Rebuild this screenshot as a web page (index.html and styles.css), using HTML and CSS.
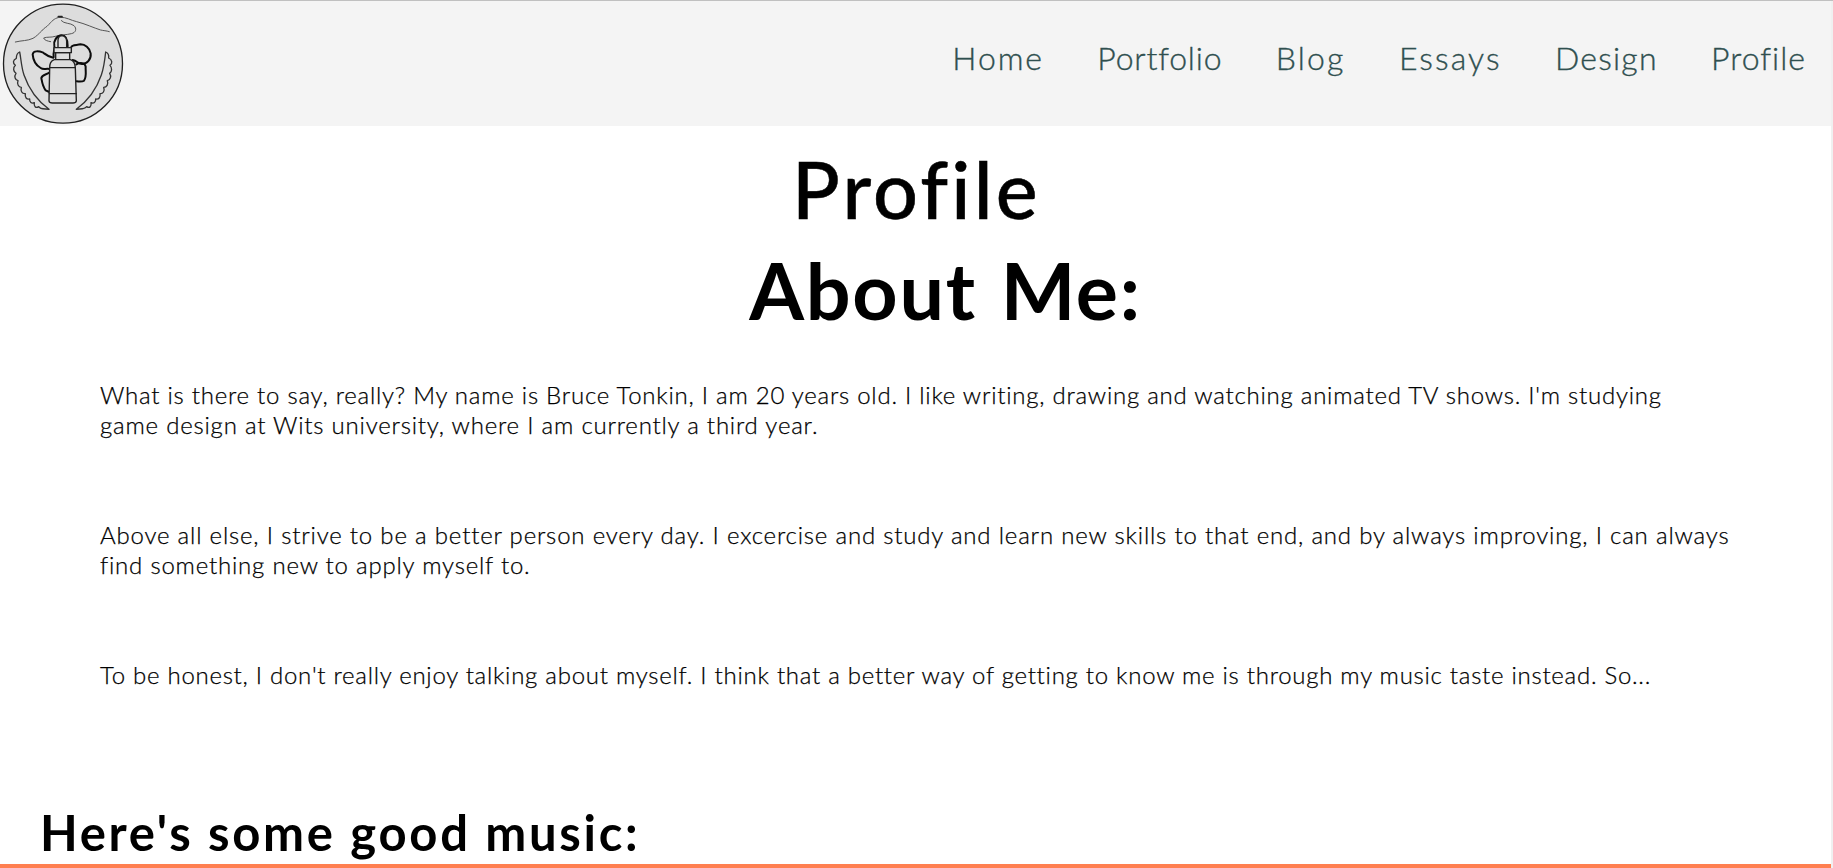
FILE: index.html
```
<!DOCTYPE html>
<html lang="en">
<head>
  <meta charset="utf-8">
  <title>Profile</title>
  <link rel="stylesheet" href="styles.css">
</head>
<body>
  <div class="page">
    <header class="header">
      <svg class="logo" viewBox="0 3 378 375" fill="none" stroke-linecap="round" stroke-linejoin="round">
        <circle cx="189" cy="191" r="178.500" fill="#dddddd" stroke="#202020" stroke-width="4"/>
        <g stroke="#555555" stroke-width="3">
          <path d="M46 126C66 121 82 123 99 115C111 108 116 101 125 93C133 82 139 83 147 73C158 60 167 53 180 52C199 51 212 61 230 65C255 71 282 84 302 90C310 92 319 92 328 95"/>
          <path d="M184 62C192 72 211 68 222 77C231 86 228 98 214 101C198 105 182 104 166 109C153 113 141 110 131 114C133 121 142 123 152 125"/>
          <path d="M175 50H186" stroke="#222222" stroke-width="5"/>
        </g>
        <g stroke="#333333" stroke-width="4">
          <path d="M59 156C51 159 49 168 49 175C38 180 38 190 46 196C38 204 40 214 48 220C41 230 46 240 54 242C50 252 56 262 64 262C61 273 66 282 76 281C74 292 80 299 89 297C88 307 95 312 103 308C101 319 107 326 116 320C121 329 136 326 147 328C108 299 85 263 72 225C64 202 63 175 59 156Z"/>
          <path d="M317 156C325 159 327 166 326 174C337 179 338 190 330 196C337 204 336 215 329 220C335 229 331 240 322 242C326 253 320 262 311 262C315 273 309 282 300 281C302 292 296 299 287 297C288 307 281 312 273 308C275 319 269 326 260 320C254 329 240 326 229 328C268 299 291 263 304 225C312 202 315 175 317 156Z"/>
        </g>
        <g stroke="#0c0c0c" stroke-width="6">
          <path d="M161 171C158 158 166 147 163 137C160 124 169 108 184 106C198 106 203 120 203 139"/>
          <path d="M214 141C216 133 229 136 242 133C255 133 269 143 272 160C274 178 261 192 247 192C235 193 232 183 218 180"/>
          <path d="M160 173C143 170 139 165 130 158C116 153 100 151 98 163C99 177 107 195 122 204C130 210 137 205 149 207"/>
          <path d="M229 193C241 187 255 188 257 200C256 215 261 229 252 242C247 246 238 245 230 244"/>
          <path d="M148 218C139 224 126 224 124 234C126 244 127 258 137 271L148 276"/>
        </g>
        <g stroke="#222222" stroke-width="4.200" fill="#dddddd">
          <path d="M174 143V120Q175 108 186 107Q199 109 200 123V143"/>
          <path d="M167 158H209V181H167Z"/>
          <path d="M162 143H214V158H162Z"/>
          <path d="M163 179Q148 184 149 205L147 303Q148 309 157 309H219Q228 309 229 303L226 205Q226 184 211 179Z"/>
          <path d="M149 203H226M148 281H229"/>
        </g>
      </svg>
      <nav class="nav">
        <a class="link home">Home</a>
        <a class="link portfolio">Portfolio</a>
        <a class="link blog">Blog</a>
        <a class="link essays">Essays</a>
        <a class="link design">Design</a>
        <a class="link profile">Profile</a>
      </nav>
    </header>
    <main>
      <h1 class="title">Profile</h1>
      <h2 class="about">About Me:</h2>
      <div class="bio">
        <p><span class="line snug">What is there to say, really? My name is Bruce Tonkin, I am 20 years old. I like writing, drawing and watching animated TV shows. I'm studying</span> <span class="line">game design at Wits university, where I am currently a third year.</span></p>
        <p><span class="line wide">Above all else, I strive to be a better person every day. I excercise and study and learn new skills to that end, and by always improving, I can always</span> <span class="line">find something new to apply myself to.</span></p>
        <p><span class="line tight">To be honest, I don't really enjoy talking about myself. I think that a better way of getting to know me is through my music taste instead. So...</span></p>
      </div>
      <h2 class="music">Here's some good music:</h2>
      <div class="player"></div>
    </main>
  </div>
</body>
</html>
```
FILE: styles.css
```
* { box-sizing: border-box; }

body {
  margin: 0;
  height: 868px;
  overflow: hidden;
  background: #fff;
  color: #000;
  font-family: Lato, "Liberation Sans", sans-serif;
  border-top: 1px solid #c0c0c0;
}

.page {
  height: 867px;
  border-right: 2px solid #f0f0f0;
  overflow: hidden;
}

.header {
  display: flex;
  justify-content: space-between;
  height: 125px;
  padding-right: 25px;
  background: #f4f4f4;
}

.logo { width: 126px; height: 125px; }

.nav {
  display: flex;
  gap: 53.4px;
  padding-top: 37px;
}

.link {
  color: darkslategray;
  font-size: 32px;
  font-weight: 300;
  line-height: 40px;
  white-space: nowrap;
  -webkit-text-stroke: 0.35px darkslategray;
}

.home { letter-spacing: 1.9px; }
.portfolio { letter-spacing: 0.8px; }
.blog { letter-spacing: 2.2px; }
.essays { letter-spacing: 2.1px; }
.design { letter-spacing: 1.2px; }
.profile { letter-spacing: 1px; }

.title,
.about {
  margin: 0;
  font-size: 79px;
  line-height: 101px;
  text-align: center;
}

.title {
  margin-top: 12px;
  padding-left: 2px;
  font-weight: 500;
  letter-spacing: 3.2px;
  -webkit-text-stroke: 0.5px #000;
}

.about {
  padding-left: 60px;
  font-weight: 700;
  letter-spacing: 1.7px;
  word-spacing: 3px;
}

.bio {
  display: flex;
  flex-direction: column;
  gap: 80px;
  margin: 40px 80px 0 100px;
  font-size: 24px;
  font-weight: 300;
  line-height: 30px;
  -webkit-text-stroke: 0.25px #000;
}

.bio p { margin: 0; }

.line {
  display: block;
  white-space: nowrap;
  letter-spacing: 0.79px;
}

.line.snug { letter-spacing: 0.75px; }
.line.tight { letter-spacing: 0.73px; }
.line.wide { letter-spacing: 0.81px; }

.music {
  margin: 111px 0 1px 40px;
  font-size: 49px;
  font-weight: 700;
  line-height: 62px;
  letter-spacing: 2.7px;
}

.player {
  height: 8px;
  background: coral;
}
```
